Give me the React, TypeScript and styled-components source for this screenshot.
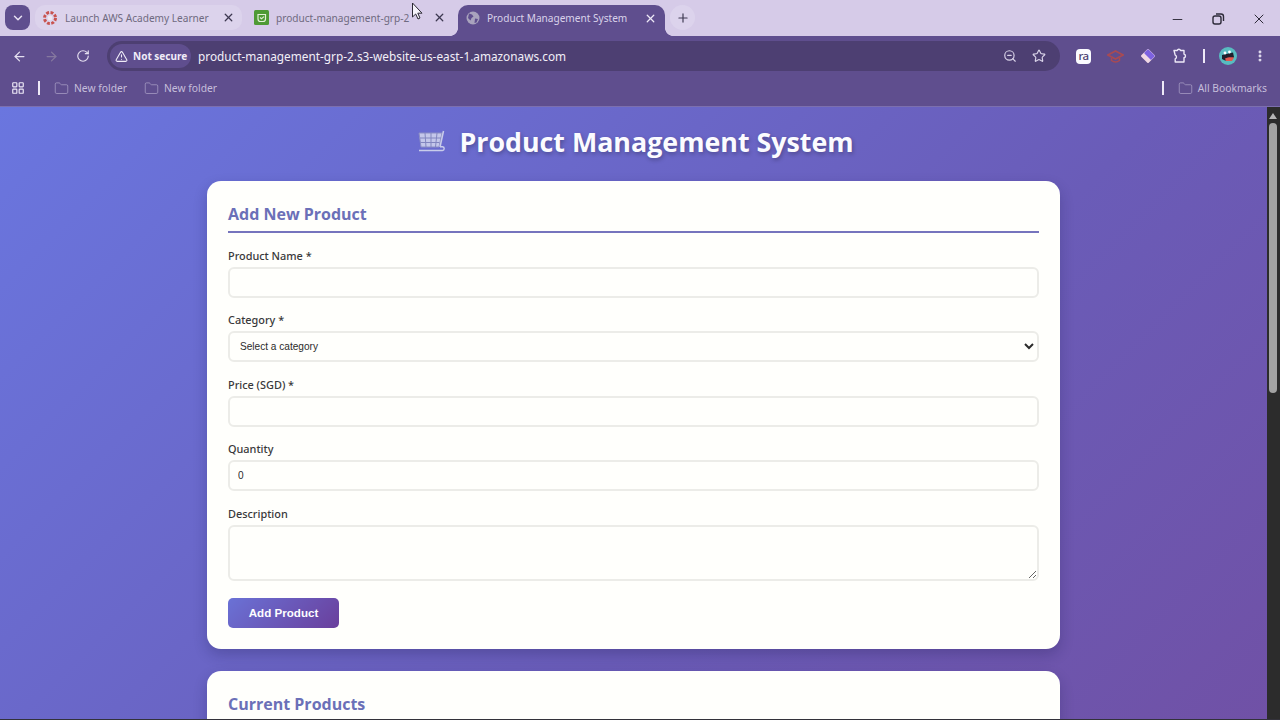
import * as React from 'react';
import styled, { createGlobalStyle } from 'styled-components';
import { ArrowLeft, ArrowRight, ChevronDown, EllipsisVertical, Folder, LayoutGrid, Minus, Plus, RotateCw, Star, TriangleAlert, X, ZoomOut } from 'lucide-react';

const GlobalStyle = createGlobalStyle`
  html, body {
    margin: 0;
    height: 720px;
    overflow: hidden;
    font-family: 'Noto Sans', 'Open Sans', sans-serif;
  }
  * { box-sizing: border-box; }
`;

const Shell = styled.div`
  width: 1280px;
  height: 720px;
  display: flex;
  flex-direction: column;
  overflow: hidden;
  background: #5f4e8e;
`;

const TabStrip = styled.div`
  height: 36px;
  flex: none;
  display: flex;
  align-items: flex-start;
  background: #d6cbe8;
  padding: 5px 0 0 5px;
`;

const TabMenu = styled.button`
  width: 25px;
  height: 25px;
  border: 0;
  padding: 0;
  border-radius: 8px;
  background: #5f4e8e;
  color: #e9e3f4;
  display: flex;
  align-items: center;
  justify-content: center;
  margin-right: 5px;
`;

const Tab = styled.div<{ $active?: boolean; $hover?: boolean; $width: number; $pad: number }>`
  position: relative;
  flex: none;
  width: ${(p) => p.$width}px;
  height: ${(p) => (p.$active ? 31 : 25)}px;
  display: flex;
  align-items: center;
  padding: ${(p) => (p.$active ? '0 8px 5px' : '0 8px')};
  padding-left: ${(p) => p.$pad}px;
  padding-right: ${(p) => p.$pad}px;
  gap: 7px;
  font-size: 10.1px;
  border-radius: ${(p) => (p.$active ? '10px 10px 0 0' : '10px')};
  background: ${(p) => (p.$active ? '#5f4e8e' : p.$hover ? '#dcd3ec' : 'transparent')};
  color: ${(p) => (p.$active ? '#d9d2ea' : '#6f6a80')};

  ${(p) =>
    p.$active
      ? `
    &::before, &::after {
      content: '';
      position: absolute;
      bottom: 0;
      width: 8px;
      height: 8px;
    }
    &::before {
      left: -8px;
      background: radial-gradient(circle at 0 0, transparent 7.6px, #5f4e8e 8.2px);
    }
    &::after {
      right: -8px;
      background: radial-gradient(circle at 100% 0, transparent 7.6px, #5f4e8e 8.2px);
    }
  `
      : ''}
`;

const TabTitle = styled.span`
  flex: 1;
  min-width: 0;
  white-space: nowrap;
`;

const TabClose = styled.span<{ $light?: boolean }>`
  flex: none;
  display: flex;
  color: ${(p) => (p.$light ? '#eee9f7' : '#3d3850')};
`;

const NewTab = styled.div`
  width: 25px;
  height: 25px;
  margin-left: 5px;
  border-radius: 50%;
  background: #dcd3ec;
  color: #3d3850;
  display: flex;
  align-items: center;
  justify-content: center;
`;

const WindowButtons = styled.div`
  margin-left: auto;
  display: flex;
  align-items: center;
  gap: 26px;
  padding: 6px 13px 0 0;
  color: #2d2a38;
`;

const Toolbar = styled.div`
  height: 36px;
  flex: none;
  display: flex;
  align-items: center;
  padding: 4px 13px 0 12px;
  background: #5f4e8e;
  color: #e4dff0;
`;

const NavIcons = styled.div`
  display: flex;
  align-items: center;
  gap: 17px;
  margin-right: 17px;
`;

const Omnibox = styled.div`
  width: 953px;
  height: 30px;
  display: flex;
  align-items: center;
  border-radius: 15px;
  background: #4d3f72;
  padding: 0 14px 0 3px;
`;

const SecurityChip = styled.div`
  width: 81px;
  height: 24px;
  flex: none;
  display: flex;
  align-items: center;
  gap: 5px;
  padding: 0 0 0 5px;
  border-radius: 12px;
  background: #5f4e8e;
  font-size: 10px;
  font-weight: 700;
  color: #f0ecf8;
  white-space: nowrap;
`;

const Url = styled.span`
  flex: 1;
  margin-left: 7px;
  font-size: 11.8px;
  color: #f2eff8;
  white-space: nowrap;
`;

const OmniIcons = styled.div`
  display: flex;
  align-items: center;
  gap: 15px;
  color: #d9d3e8;
`;

const Extensions = styled.div`
  display: flex;
  align-items: center;
  margin-left: auto;
  gap: 16px;
`;

const Divider = styled.span<{ $tight?: boolean }>`
  flex: none;
  width: 2px;
  height: 14px;
  background: #eee9f7;
  margin: ${(p) => (p.$tight ? '0 -1.5px' : '0')};
`;

const RaBadge = styled.span`
  width: 15px;
  height: 15px;
  border-radius: 4px;
  background: #fbfbff;
  color: #4d3f72;
  font-size: 11.5px;
  font-weight: 500;
  line-height: 13px;
  text-align: center;
  letter-spacing: -0.5px;
`;

const BookmarkBar = styled.div`
  height: 35px;
  flex: none;
  display: flex;
  align-items: center;
  padding: 0 13px 2px 11px;
  background: #5f4e8e;
  border-bottom: 1px solid #7c6fae;
  font-size: 10.3px;
  color: #c6bedb;
`;

const BookmarkItem = styled.span`
  display: flex;
  align-items: center;
  gap: 5px;
  margin-left: 14px;
  white-space: nowrap;

  & + & {
    margin-left: 17px;
  }

  svg {
    color: #a99fc5;
  }
`;

const AppsIcon = styled.span`
  display: flex;
  margin-right: 13px;
  color: #eee9f7;
`;

const BookmarkRight = styled.div`
  margin-left: auto;
  display: flex;
  align-items: center;
`;

const Viewport = styled.div`
  flex: 1;
  min-height: 0;
  display: flex;
`;

const Page = styled.main`
  flex: 1;
  min-width: 0;
  overflow: hidden;
  background: linear-gradient(135deg, #6a76df 0%, #6a5cb8 62%, #7051a6 100%);
`;

const PageTitle = styled.h1`
  margin: 0;
  height: 74px;
  display: flex;
  align-items: center;
  justify-content: center;
  gap: 13px;
  padding: 0 0 5px 4px;
  font-family: 'Open Sans', 'Noto Sans', sans-serif;
  font-size: 26.8px;
  font-weight: 700;
  color: #fbfbff;
  text-shadow: 1px 2px 4px rgba(0, 0, 0, 0.28);
`;

const Card = styled.section`
  width: 853px;
  margin: 0 auto 22px;
  padding: 21px;
  border-radius: 14px;
  background: #fffffc;
  box-shadow: 0 6px 14px rgba(20, 20, 70, 0.24);
`;

const CardTitle = styled.h2<{ $underline?: boolean }>`
  margin: 0;
  height: 31px;
  font-family: 'Open Sans', 'Noto Sans', sans-serif;
  font-size: 16px;
  line-height: 24px;
  font-weight: 700;
  color: #6b70b8;
  border-bottom: ${(p) => (p.$underline ? '2px solid #7674bd' : '0')};
`;

const Form = styled.form`
  display: flex;
  flex-direction: column;
  padding-top: 14px;
`;

const Field = styled.div`
  display: flex;
  flex-direction: column;
  margin-bottom: 13.4px;
`;

const Label = styled.label`
  height: 20px;
  font-size: 10.9px;
  line-height: 18px;
  font-weight: 500;
  color: #38383a;
`;

const controlStyles = `
  width: 100%;
  border: 2px solid #ecece8;
  border-radius: 6px;
  background: #fffffc;
  font-family: 'Liberation Sans', Arial, sans-serif;
  font-size: 10.1px;
  color: #2b2b2b;
  outline: none;
`;

const Input = styled.input`
  ${controlStyles}
  height: 31px;
  padding: 0 8px;
`;

const Select = styled.select`
  ${controlStyles}
  height: 31px;
  padding: 0 6px;
`;

const TextArea = styled.textarea`
  ${controlStyles}
  height: 56px;
  padding: 8px 10px;
  display: block;
`;

const SubmitButton = styled.button`
  align-self: flex-start;
  width: 111px;
  height: 30px;
  margin-top: 4px;
  border: 0;
  border-radius: 5px;
  background: linear-gradient(135deg, #6a72d6 0%, #6a3f9c 100%);
  color: #fdfdff;
  font-family: 'Liberation Sans', Arial, sans-serif;
  font-size: 11.6px;
  font-weight: 700;
`;

const Scrollbar = styled.div`
  position: relative;
  flex: none;
  width: 13px;
  background: #2c2c2c;
`;

const ScrollThumb = styled.div`
  position: absolute;
  left: 2px;
  top: 16px;
  width: 8px;
  height: 270px;
  border-radius: 4px;
  background: #a3a3a3;
`;

const ScrollArrow = styled.div`
  position: absolute;
  left: 2px;
  top: 6px;
  border-left: 4px solid transparent;
  border-right: 4px solid transparent;
  border-bottom: 6px solid #b5b5b5;
`;

const WindowEdge = styled.div`
  height: 1px;
  flex: none;
  background: #33323a;
`;

const Cursor = styled.svg`
  position: absolute;
  left: 411px;
  top: 2px;
`;

const CanvasIcon = () => (
  <svg width="16" height="16" viewBox="0 0 16 16">
    <circle cx="8" cy="8" r="5.5" fill="none" stroke="#c8534f" strokeWidth="3" strokeDasharray="2.8 1.5" />
    <circle cx="8" cy="8" r="2.4" fill="#efe8f2" />
  </svg>
);

const BucketIcon = () => (
  <svg width="15" height="15" viewBox="0 0 15 15">
    <rect width="15" height="15" rx="1.5" fill="#4f9a35" />
    <path d="M4 4.5h7.5v4.5a2.5 2.5 0 0 1-2.5 2.5H6.5A2.5 2.5 0 0 1 4 9z" fill="none" stroke="#e4f2d8" strokeWidth="1.2" />
    <path d="M6 7.5l1.5 1.2L10 6.6" fill="none" stroke="#e4f2d8" strokeWidth="1.1" />
  </svg>
);

const GlobeIcon = () => (
  <svg width="14" height="14" viewBox="0 0 14 14">
    <circle cx="7" cy="7" r="6.5" fill="#a9a3bd" />
    <path d="M3 2.5l3 1 1.5 2-2 1.5-1 2.5-2.5-2.5zM9 7.5l3 .5-1.5 3.5-2 .5z" fill="#5f4e8e" />
  </svg>
);

const CapIcon = () => (
  <svg width="17" height="15" viewBox="0 0 17 15">
    <path d="M8.5 2 16 6l-7.5 4L1 6z" fill="none" stroke="#a94a52" strokeWidth="1.7" />
    <path d="M4.5 9v2.5c2.5 2 5.5 2 8 0V9" fill="none" stroke="#a94a52" strokeWidth="1.5" />
  </svg>
);

const DiamondIcon = () => (
  <svg width="16" height="16" viewBox="0 0 16 16" strokeLinejoin="round">
    <path d="M8 2l6 6-6 6-6-6z" fill="#f0d8e4" stroke="#f0d8e4" strokeWidth="2" />
    <path d="M8 2l6 6-3 3-6-6z" fill="#7d62e0" stroke="#7d62e0" strokeWidth="1.5" />
  </svg>
);

const ExtensionsIcon = () => (
  <svg width="16" height="16" viewBox="0 0 16 16" fill="none" stroke="#eee9f7" strokeWidth="1.4" strokeLinejoin="round">
    <path d="M2 2.5h3.2a1.8 1.8 0 0 1 3.4 0H12v3.6a1.9 1.9 0 0 1 0 3.7V14H3.2v-3.2a1.9 1.9 0 0 0 0-3.6z" />
  </svg>
);

const AvatarIcon = () => (
  <svg width="18" height="18" viewBox="0 0 18 18">
    <circle cx="9" cy="9" r="9" fill="#58bcc0" />
    <path d="M3 8l11-2.5 1 4.5-3 3.5H6L3 12z" fill="#20202c" />
    <path d="M6 11.5c3-1.6 6-1.6 9-1l-2 3.5H7z" fill="#e2584f" />
    <circle cx="6" cy="6" r="1.4" fill="#fff" />
    <circle cx="10.5" cy="5" r="1.4" fill="#fff" />
  </svg>
);

const CartIcon = () => (
  <svg width="29" height="23" viewBox="0 0 29 23">
    <path d="M2 3h23l-3 14H4z" fill="#c4c7ea" stroke="#8b8ec4" strokeWidth="1" />
    <path d="M8 3l1 14M14 3v14M20 3l-1.500 14M3 8h21M3.500 12.500h19" fill="none" stroke="#8286bf" strokeWidth="1" />
    <path d="M26.500 1 23 17" fill="none" stroke="#c9cdea" strokeWidth="1.5" />
    <path d="M2 20.500h23.500c2 0 2.500-3.500 0-3.800h-2.500" fill="none" stroke="#c9cdea" strokeWidth="1.4" />
  </svg>
);

const App = () => (
  <Shell>
    <GlobalStyle />
    <TabStrip>
      <TabMenu><ChevronDown size={14} strokeWidth={2.5} /></TabMenu>
      <Tab $hover $width={207} $pad={7}>
        <CanvasIcon />
        <TabTitle>Launch AWS Academy Learner</TabTitle>
        <TabClose><X size={13} strokeWidth={2.4} /></TabClose>
      </Tab>
      <Tab $width={216} $pad={12}>
        <BucketIcon />
        <TabTitle>product-management-grp-2</TabTitle>
        <TabClose><X size={13} strokeWidth={2.4} /></TabClose>
      </Tab>
      <Tab $active $width={207} $pad={8}>
        <GlobeIcon />
        <TabTitle>Product Management System</TabTitle>
        <TabClose $light><X size={13} strokeWidth={2.4} /></TabClose>
      </Tab>
      <NewTab><Plus size={14} strokeWidth={2} /></NewTab>
      <WindowButtons>
        <Minus size={15} strokeWidth={1.5} />
        <svg width="14" height="14" viewBox="0 0 14 14" fill="none" stroke="currentColor" strokeWidth="1.4">
          <rect x="2" y="4" width="8" height="8" rx="2" />
          <path d="M5 2h5a2.5 2.5 0 0 1 2.500 2.500V9" />
        </svg>
        <X size={16} strokeWidth={1.5} />
      </WindowButtons>
    </TabStrip>
    <Toolbar>
      <NavIcons>
        <ArrowLeft size={15} />
        <ArrowRight size={15} color="#85789f" />
        <RotateCw size={14} />
      </NavIcons>
      <Omnibox>
        <SecurityChip><TriangleAlert size={13} />Not secure</SecurityChip>
        <Url>product-management-grp-2.s3-website-us-east-1.amazonaws.com</Url>
        <OmniIcons>
          <ZoomOut size={14} />
          <Star size={14} />
        </OmniIcons>
      </Omnibox>
      <Extensions>
        <RaBadge>ra</RaBadge>
        <CapIcon />
        <DiamondIcon />
        <ExtensionsIcon />
        <Divider $tight />
        <AvatarIcon />
        <EllipsisVertical size={14} strokeWidth={3} />
      </Extensions>
    </Toolbar>
    <BookmarkBar>
      <AppsIcon><LayoutGrid size={14} /></AppsIcon>
      <Divider />
      <BookmarkItem><Folder size={15} strokeWidth={1.2} />New folder</BookmarkItem>
      <BookmarkItem><Folder size={15} strokeWidth={1.2} />New folder</BookmarkItem>
      <BookmarkRight>
        <Divider />
        <BookmarkItem><Folder size={15} strokeWidth={1.2} />All Bookmarks</BookmarkItem>
      </BookmarkRight>
    </BookmarkBar>
    <Viewport>
      <Page>
        <PageTitle><CartIcon />Product Management System</PageTitle>
        <Card>
          <CardTitle $underline>Add New Product</CardTitle>
          <Form>
            <Field>
              <Label htmlFor="name">Product Name *</Label>
              <Input id="name" />
            </Field>
            <Field>
              <Label htmlFor="category">Category *</Label>
              <Select id="category" defaultValue="">
                <option value="">Select a category</option>
              </Select>
            </Field>
            <Field>
              <Label htmlFor="price">Price (SGD) *</Label>
              <Input id="price" />
            </Field>
            <Field>
              <Label htmlFor="quantity">Quantity</Label>
              <Input id="quantity" defaultValue="0" />
            </Field>
            <Field>
              <Label htmlFor="description">Description</Label>
              <TextArea id="description" />
            </Field>
            <SubmitButton type="button">Add Product</SubmitButton>
          </Form>
        </Card>
        <Card>
          <CardTitle>Current Products</CardTitle>
        </Card>
      </Page>
      <Scrollbar>
        <ScrollArrow />
        <ScrollThumb />
      </Scrollbar>
    </Viewport>
    <WindowEdge />
    <Cursor width="14" height="20" viewBox="0 0 14 20">
      <path d="M1.500 1v14l3.200-3 2.300 5 2-1-2.200-4.800H11z" fill="#f5f3fa" stroke="#2a2833" strokeWidth="1" />
    </Cursor>
  </Shell>
);

export default App;
